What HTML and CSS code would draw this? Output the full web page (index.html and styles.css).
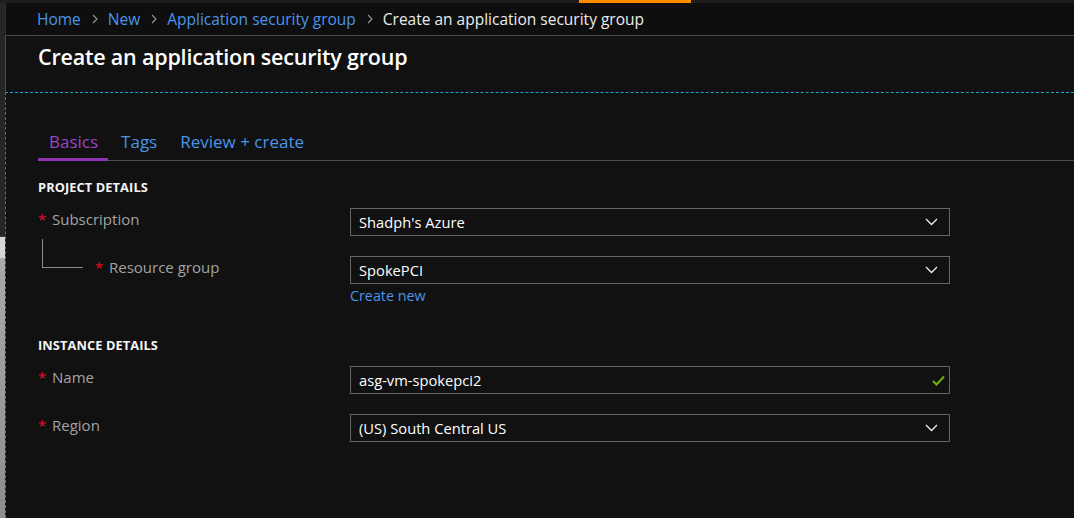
FILE: index.html
```html
<!DOCTYPE html>
<html lang="en">
<head>
<meta charset="utf-8">
<title>Create an application security group</title>
<link rel="stylesheet" href="styles.css">
</head>
<body>
<div class="topstrip"><span class="accent"></span></div>
<div class="shell">
  <div class="peek">
    <div class="peek-dark"></div>
    <div class="peek-light"></div>
    <div class="peek-grad"></div>
  </div>
  <div class="main">
    <nav class="crumbs">
      <a class="crumb-link">Home</a>
      <svg class="sep" viewBox="0 0 6 10" width="6" height="10"><path d="M1 1l4 4-4 4" fill="none" stroke="#9a9a9a" stroke-width="1.1"/></svg>
      <a class="crumb-link">New</a>
      <svg class="sep" viewBox="0 0 6 10" width="6" height="10"><path d="M1 1l4 4-4 4" fill="none" stroke="#9a9a9a" stroke-width="1.1"/></svg>
      <a class="crumb-link">Application security group</a>
      <svg class="sep" viewBox="0 0 6 10" width="6" height="10"><path d="M1 1l4 4-4 4" fill="none" stroke="#9a9a9a" stroke-width="1.1"/></svg>
      <span class="crumb-current">Create an application security group</span>
    </nav>
    <header class="header">
      <h1 class="title">Create an application security group</h1>
    </header>
    <section class="form">
      <div class="tabs">
        <span class="tab tab-active">Basics</span>
        <span class="tab">Tags</span>
        <span class="tab">Review + create</span>
      </div>

      <h2 class="section-title">PROJECT DETAILS</h2>
      <div class="row">
        <div class="label"><span class="req">*</span>Subscription</div>
        <div class="control">
          <div class="field">
            <span class="value">Shadph's Azure</span>
            <svg class="chev" viewBox="0 0 13 8" width="13" height="8"><path d="M1 1l5.5 5.5L12 1" fill="none" stroke="#f0f0f0" stroke-width="1.3"/></svg>
          </div>
        </div>
      </div>
      <div class="row row-sub">
        <div class="label"><span class="tree"></span><span class="req">*</span>Resource group</div>
        <div class="control">
          <div class="field">
            <span class="value">SpokePCI</span>
            <svg class="chev" viewBox="0 0 13 8" width="13" height="8"><path d="M1 1l5.5 5.5L12 1" fill="none" stroke="#f0f0f0" stroke-width="1.3"/></svg>
          </div>
          <a class="link">Create new</a>
        </div>
      </div>

      <h2 class="section-title section-2">INSTANCE DETAILS</h2>
      <div class="row">
        <div class="label"><span class="req">*</span>Name</div>
        <div class="control">
          <div class="field">
            <span class="value">asg-vm-spokepci2</span>
            <svg class="check" viewBox="0 0 13 11" width="13" height="11"><path d="M1 6l3.5 3.5L12 1.5" fill="none" stroke="#6bb700" stroke-width="2"/></svg>
          </div>
        </div>
      </div>
      <div class="row">
        <div class="label"><span class="req">*</span>Region</div>
        <div class="control">
          <div class="field">
            <span class="value">(US) South Central US</span>
            <svg class="chev" viewBox="0 0 13 8" width="13" height="8"><path d="M1 1l5.5 5.5L12 1" fill="none" stroke="#f0f0f0" stroke-width="1.3"/></svg>
          </div>
        </div>
      </div>
    </section>
  </div>
</div>
</body>
</html>
```

FILE: styles.css
```css
* { box-sizing: border-box; }

html, body {
  margin: 0;
  padding: 0;
  background: #111111;
}

body {
  width: 1074px;
  height: 518px;
  overflow: hidden;
  font-family: "Open Sans", "Noto Sans", "Liberation Sans", sans-serif;
  color: #f2f2f2;
}

.topstrip {
  height: 3px;
  background: #1d1d1d;
  display: flex;
}

.accent {
  margin-left: 579px;
  width: 112px;
  background: #ff8c00;
}

.shell {
  display: flex;
  height: 515px;
}

.peek {
  width: 5px;
  display: flex;
  flex-direction: column;
}

.peek-dark {
  height: 234px;
  background: #262626;
  border-bottom: 1px solid #3a3a3a;
}

.peek-light {
  height: 21px;
  background: #d6d6d6;
}

.peek-grad {
  flex: 1;
  background: linear-gradient(#a9a9a9, #8d8d8d);
}

.main {
  flex: 1;
  display: flex;
  flex-direction: column;
  min-width: 0;
}

/* breadcrumb */
.crumbs {
  height: 33px;
  display: flex;
  align-items: center;
  padding-left: 31px;
  padding-bottom: 1px;
  background: #0e0e0e;
  border-bottom: 1px solid #4a4a4a;
  border-left: 1px solid #2e2e2e;
  font-size: 15.5px;
  white-space: nowrap;
}

.crumb-link {
  color: #4a95e8;
}

.crumb-current {
  color: #ececec;
}

.sep {
  margin: 1px 10px 0 11px;
}

/* header */
.header {
  height: 56px;
  border-left: 1px solid #4c4c4c;
  padding-left: 32px;
  padding-top: 6px;
}

.title {
  margin: 0;
  font-size: 21.5px;
  line-height: 30px;
  font-weight: 600;
  color: #ffffff;
  letter-spacing: -0.2px;
}

/* form area */
.form {
  flex: 1;
  border-top: 1px dashed #1ba6d9;
  border-left: 1px dashed #1a8ab5;
  padding-left: 32px;
}

.tabs {
  margin-top: 37px;
  display: flex;
  gap: 2px;
  border-bottom: 1px solid #505050;
}

.tab {
  font-size: 17px;
  line-height: 24px;
  padding: 0 10px 4px 11px;
  color: #4a95e8;
  border-bottom: 3px solid transparent;
  margin-bottom: -1px;
}

.tab-active {
  color: #9a45c4;
  border-bottom-color: #8e35b3;
}

.section-title {
  margin: 17px 0 12px;
  font-size: 12.8px;
  line-height: 18px;
  font-weight: 700;
  color: #f4f4f4;
  letter-spacing: 0.1px;
}

.section-2 {
  margin-top: 29px;
  margin-bottom: 12px;
}

.row {
  display: grid;
  grid-template-columns: 312px 600px;
  margin-bottom: 20px;
}

.row-sub {
  margin-bottom: 0;
}

.label {
  display: flex;
  align-items: flex-start;
  margin-top: -1px;
  font-size: 15px;
  line-height: 24px;
  color: #a3a3a3;
}

.req {
  color: #e3101e;
  width: 14px;
  font-size: 15px;
}

.tree {
  width: 41px;
  height: 29px;
  margin-left: 4px;
  margin-top: -16px;
  margin-right: 12px;
  border-left: 1px solid #8a8a8a;
  border-bottom: 1px solid #8a8a8a;
}

.control {
  display: flex;
  flex-direction: column;
}

.field {
  height: 28px;
  border: 1px solid #646464;
  background: #111111;
  display: flex;
  align-items: center;
  padding-left: 8px;
  padding-right: 11px;
}

.value {
  flex: 1;
  font-size: 14.7px;
  color: #ffffff;
}

.chev {
  display: block;
}

.check {
  display: block;
  margin-right: -7px;
}

.link {
  font-size: 14.3px;
  line-height: 22px;
  color: #4a95e8;
  margin-top: 1px;
}
```
